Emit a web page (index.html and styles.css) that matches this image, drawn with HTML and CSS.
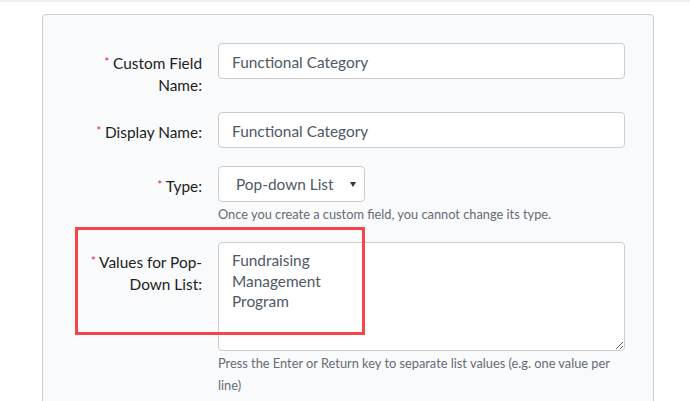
FILE: index.html
```html
<!DOCTYPE html>
<html lang="en">
<head>
    <meta charset="UTF-8">
    <title>Custom Field</title>
    <link rel="stylesheet" href="styles.css">
</head>
<body>
    <div class="topbar"></div>

    <div class="card">
        <div class="row">
            <label class="field-label"><span class="req">*</span> Custom Field Name:</label>
            <div class="field">
                <input type="text" class="text-input" value="Functional Category">
            </div>
        </div>

        <div class="row row-wide">
            <label class="field-label"><span class="req">*</span> Display Name:</label>
            <div class="field">
                <input type="text" class="text-input" value="Functional Category">
            </div>
        </div>

        <div class="row row-help">
            <label class="field-label"><span class="req">*</span> Type:</label>
            <div class="field">
                <div class="select">
                    <span>Pop-down List</span>
                    <span class="caret"></span>
                </div>
                <p class="help">Once you create a custom field, you cannot change its type.</p>
            </div>
        </div>

        <div class="row">
            <label class="field-label"><span class="req">*</span> Values for Pop-Down List:</label>
            <div class="field">
                <textarea class="text-area">Fundraising
Management
Program</textarea>
                <p class="help">Press the Enter or Return key to separate list values (e.g. one value per line)</p>
            </div>
        </div>

        <!-- annotation box drawn over the form -->
        <div class="highlight"></div>
    </div>
</body>
</html>
```

FILE: styles.css
```css
body { margin: 0; background: #fff; font-family: Lato, "Open Sans", sans-serif; color: #1d1d1d; }

.topbar { height: 2px; background: #efefef; }

.card { position: relative; margin: 12px 0 0 42px; width: 612px; height: 420px; padding: 28px 0 0 0; box-sizing: border-box; background: #f9fafc; border: 1px solid #cfcfcf; border-radius: 4px; }

.row { display: flex; margin-bottom: 16px; }
.row-wide { margin-bottom: 18px; }
.row-help { margin-bottom: 17px; }

.field-label { width: 122px; margin-left: 37px; padding-top: 8px; font-size: 15.4px; line-height: 22px; text-align: right; }
.req { color: #e8103c; font-size: 11px; vertical-align: 3px; }

.field { margin-left: 16px; width: 407px; }

.text-input { display: block; width: 100%; height: 36px; box-sizing: border-box; padding: 1px 13px 0; font-family: Lato, sans-serif; font-size: 15.4px; color: #4e5866; background: #fff; border: 1px solid #cccccc; border-radius: 4px; outline: none; }

.select { display: flex; align-items: center; justify-content: space-between; width: 147px; height: 36px; box-sizing: border-box; padding: 0 8px 0 17px; font-size: 15.4px; color: #4e5866; background: #fff; border: 1px solid #cccccc; border-radius: 4px; }
.caret { width: 0; height: 0; border-left: 3px solid transparent; border-right: 3px solid transparent; border-top: 5px solid #333; }

.text-area { display: block; width: 100%; height: 109px; box-sizing: border-box; padding: 7px 13px; font-family: Lato, sans-serif; font-size: 15.4px; line-height: 20.5px; color: #4e5866; background: #fff; border: 1px solid #cccccc; border-radius: 4px; outline: none; resize: vertical; }

.help { margin: 1px 0 0 0; font-size: 12.8px; line-height: 22px; color: #666b73; }

.highlight { position: absolute; left: 32px; top: 212px; width: 284px; height: 102px; border: 3px solid #f6454a; }
```
